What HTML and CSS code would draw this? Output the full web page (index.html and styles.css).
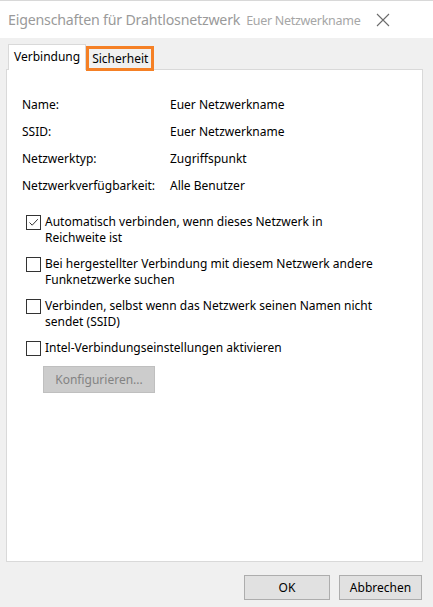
FILE: index.html
```html
<!DOCTYPE html>
<html lang="de">
<head>
  <meta charset="UTF-8">
  <title>Eigenschaften für Drahtlosnetzwerk</title>
  <link rel="stylesheet" href="styles.css">
</head>
<body>
  <div class="window">
    <!-- Titelleiste -->
    <div class="titlebar">
      <span class="title">Eigenschaften für Drahtlosnetzwerk</span>
      <span class="subtitle">Euer Netzwerkname</span>
      <svg class="close" width="14" height="14" viewBox="0 0 14 14">
        <path d="M1 1 L13 13 M13 1 L1 13" stroke="#6b6b6b" stroke-width="1.1" fill="none"/>
      </svg>
    </div>

    <div class="content">
      <!-- Reiter -->
      <div class="tabs">
        <div class="tab tab-active">Verbindung</div>
        <div class="tab tab-marked">Sicherheit</div>
      </div>

      <div class="panel">
        <div class="info">
          <span class="label">Name:</span><span class="value">Euer Netzwerkname</span>
          <span class="label">SSID:</span><span class="value">Euer Netzwerkname</span>
          <span class="label">Netzwerktyp:</span><span class="value">Zugriffspunkt</span>
          <span class="label">Netzwerkverfügbarkeit:</span><span class="value">Alle Benutzer</span>
        </div>

        <div class="options">
          <label class="option">
            <span class="box checked">
              <svg width="13" height="13" viewBox="0 0 13 13"><path d="M2.5 6.5 L5.2 9.2 L10.8 3.2" stroke="#333" stroke-width="1" fill="none"/></svg>
            </span>
            <span>Automatisch verbinden, wenn dieses Netzwerk in<br>Reichweite ist</span>
          </label>
          <label class="option">
            <span class="box"></span>
            <span>Bei hergestellter Verbindung mit diesem Netzwerk andere<br>Funknetzwerke suchen</span>
          </label>
          <label class="option">
            <span class="box"></span>
            <span>Verbinden, selbst wenn das Netzwerk seinen Namen nicht<br>sendet (SSID)</span>
          </label>
          <label class="option">
            <span class="box"></span>
            <span>Intel-Verbindungseinstellungen aktivieren</span>
          </label>
          <button class="btn btn-disabled">Konfigurieren...</button>
        </div>
      </div>

      <div class="footer">
        <button class="btn btn-ok">OK</button>
        <button class="btn btn-cancel">Abbrechen</button>
      </div>
    </div>
  </div>
</body>
</html>
```
FILE: styles.css
```css
/* Grundlayout */
body {
  margin: 0;
  font-family: "Noto Sans", "Open Sans", sans-serif;
  font-size: 12px;
  color: #000;
  background: #f0f0f0;
}

.window {
  width: 433px;
  height: 607px;
  display: flex;
  flex-direction: column;
  background: #f0f0f0;
}

/* Titelleiste */
.titlebar {
  height: 38px;
  background: #fff;
  display: flex;
  align-items: center;
  padding: 0 0 0 8px;
  box-sizing: border-box;
  border-top: 1px solid #d8d8d8;
  white-space: nowrap;
}

.title {
  font-size: 14.2px;
  letter-spacing: -0.2px;
  color: #9a9a9a;
}

.subtitle {
  font-size: 12.5px;
  letter-spacing: -0.3px;
  color: #a6a6a6;
  margin-left: 6px;
  margin-top: 1px;
}

.close {
  margin-left: auto;
  margin-right: 43px;
  flex: none;
}

/* Inhalt */
.content {
  flex: 1;
  display: flex;
  flex-direction: column;
  padding: 6px 10px 0 6px;
}

.tabs {
  display: flex;
  align-items: flex-end;
  padding-left: 2px;
  height: 26px;
  position: relative;
  z-index: 1;
}

.tab {
  height: 24px;
  line-height: 22px;
  padding: 0 5px;
  box-sizing: border-box;
  white-space: nowrap;
}

.tab-active {
  height: 26px;
  line-height: 24px;
  background: #fff;
  border: 1px solid #d9d9d9;
  border-bottom: none;
  padding: 0 5px;
}

.tab-marked {
  border: 3px solid #f58025;
  line-height: 19px;
  height: 25px;
  padding: 0 3px;
  background: #f0f0f0;
  margin-bottom: -1px;
}

.panel {
  height: 493px;
  background: #fff;
  border: 1px solid #d9d9d9;
  box-sizing: border-box;
  margin-top: -1px;
  padding: 26px 0 0 15px;
}

.info {
  display: grid;
  grid-template-columns: 148px auto;
  row-gap: 9px;
  line-height: 18px;
}

.options {
  margin-top: 19px;
  padding-left: 4px;
  display: flex;
  flex-direction: column;
  gap: 10px;
}

.option {
  display: flex;
  align-items: flex-start;
  gap: 4px;
  line-height: 16px;
  white-space: nowrap;
}

.box {
  width: 13px;
  height: 13px;
  flex: none;
  border: 1px solid #333;
  background: #fff;
  margin-top: 1px;
  display: flex;
}

.btn {
  font-family: inherit;
  font-size: 12px;
  box-sizing: border-box;
  background: #e1e1e1;
  border: 1px solid #adadad;
  color: #000;
  padding: 0;
}

.btn-disabled {
  width: 112px;
  height: 27px;
  margin-left: 17px;
  margin-top: 0;
  background: #cccccc;
  border-color: #bfbfbf;
  color: #838383;
  align-self: flex-start;
}

/* Fußzeile */
.footer {
  display: flex;
  justify-content: flex-end;
  gap: 9px;
  padding-top: 13px;
  padding-right: 1px;
}

.btn-ok, .btn-cancel {
  width: 86px;
  height: 25px;
}

.btn-cancel {
  width: 83px;
}
```
